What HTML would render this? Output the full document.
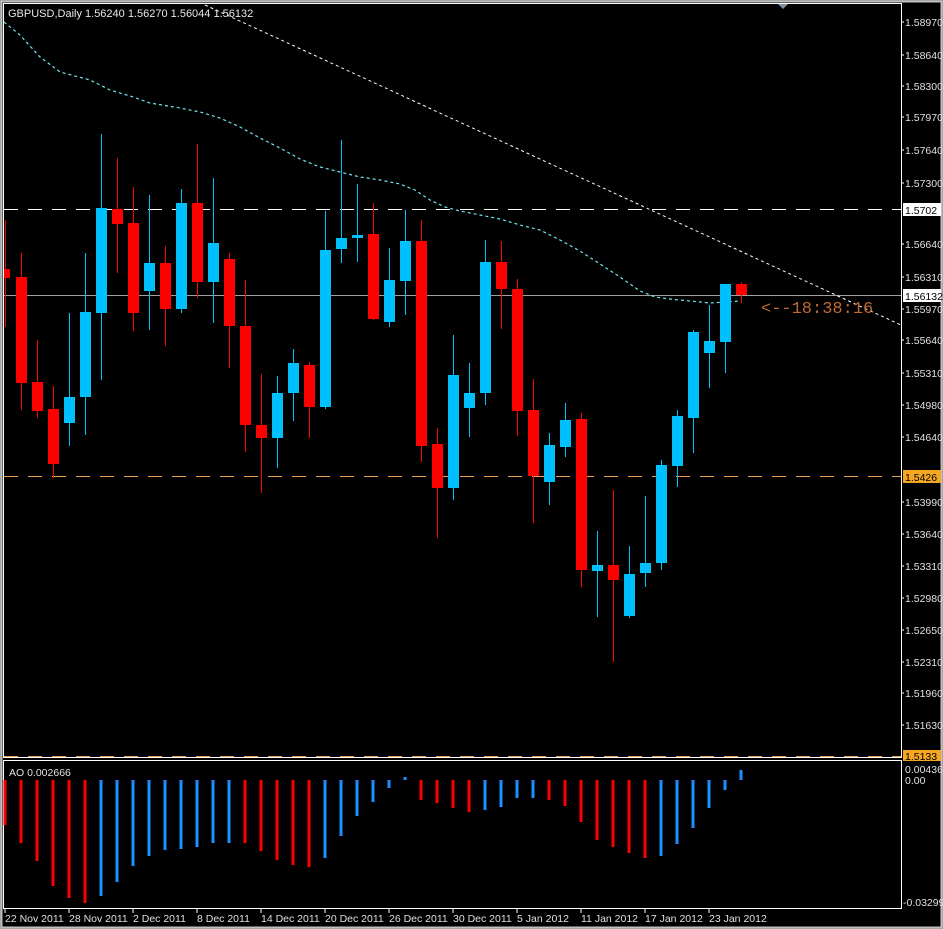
<!DOCTYPE html>
<html><head><meta charset="utf-8"><style>
html,body{margin:0;padding:0;background:#000;}
svg{display:block}
text{font-family:"Liberation Sans",Tahoma,sans-serif;font-size:10.5px;fill:#e0e0e0}
</style></head><body>
<svg width="943" height="929" viewBox="0 0 943 929" xmlns="http://www.w3.org/2000/svg">
<rect x="0" y="0" width="943" height="929" fill="#000"/>
<rect x="0.5" y="0.5" width="942" height="928" fill="none" stroke="#909090" stroke-width="1"/>
<rect x="1.5" y="1.5" width="940" height="926" fill="none" stroke="#c0c0c0" stroke-width="2"/>
<rect x="3.5" y="3.5" width="898" height="754" fill="none" stroke="#ffffff" stroke-width="1"/>
<rect x="3.5" y="760.5" width="898" height="148" fill="none" stroke="#ffffff" stroke-width="1"/>
<polygon points="778,4 788,4 783,9" fill="#8090a0"/>

<line x1="4" y1="209.5" x2="901" y2="209.5" stroke="#fff" stroke-dasharray="14,10"/>
<line x1="4" y1="295.5" x2="901" y2="295.5" stroke="#a0a0a0"/>
<line x1="4" y1="476.5" x2="901" y2="476.5" stroke="#f0a050" stroke-dasharray="14,10"/>
<line x1="4" y1="756.5" x2="901" y2="756.5" stroke="#f0a050" stroke-dasharray="14,10"/>

<line x1="205" y1="5" x2="901" y2="325" stroke="#fff" stroke-dasharray="3,3"/>
<polyline fill="none" stroke="#6fe6f0" stroke-width="1.2" stroke-dasharray="3,3" points="4,22 20,35 40,57 60,72 90,80 110,90 130,96 150,103 180,108 200,112 220,118 240,127 260,138 280,148 300,159 320,167 340,172 360,177 380,180 400,184 415,190 430,200 445,207 460,211 480,215 500,219 520,225 540,230 560,240 580,251 600,264 620,277 640,291 655,297 670,299 690,301 710,303 740,301"/>

<g id="candles">
<rect x="5" y="220" width="1" height="107" fill="#f00"/><rect x="4" y="269" width="6" height="9" fill="#f00"/>
<rect x="21" y="253" width="1" height="157" fill="#f00"/><rect x="16" y="277" width="11" height="106" fill="#f00"/>
<rect x="37" y="340" width="1" height="78" fill="#f00"/><rect x="32" y="382" width="11" height="29" fill="#f00"/>
<rect x="53" y="386" width="1" height="92" fill="#f00"/><rect x="48" y="409" width="11" height="55" fill="#f00"/>
<rect x="69" y="313" width="1" height="133" fill="#00bfff"/><rect x="64" y="397" width="11" height="26" fill="#00bfff"/>
<rect x="85" y="253" width="1" height="182" fill="#00bfff"/><rect x="80" y="312" width="11" height="85" fill="#00bfff"/>
<rect x="101" y="134" width="1" height="246" fill="#00bfff"/><rect x="96" y="208" width="11" height="105" fill="#00bfff"/>
<rect x="117" y="158" width="1" height="115" fill="#f00"/><rect x="112" y="209" width="11" height="15" fill="#f00"/>
<rect x="133" y="187" width="1" height="144" fill="#f00"/><rect x="128" y="223" width="11" height="90" fill="#f00"/>
<rect x="149" y="195" width="1" height="135" fill="#00bfff"/><rect x="144" y="263" width="11" height="28" fill="#00bfff"/>
<rect x="165" y="246" width="1" height="100" fill="#f00"/><rect x="160" y="263" width="11" height="46" fill="#f00"/>
<rect x="181" y="189" width="1" height="124" fill="#00bfff"/><rect x="176" y="203" width="11" height="106" fill="#00bfff"/>
<rect x="197" y="144" width="1" height="154" fill="#f00"/><rect x="192" y="203" width="11" height="79" fill="#f00"/>
<rect x="213" y="178" width="1" height="145" fill="#00bfff"/><rect x="208" y="243" width="11" height="39" fill="#00bfff"/>
<rect x="229" y="253" width="1" height="115" fill="#f00"/><rect x="224" y="259" width="11" height="67" fill="#f00"/>
<rect x="245" y="280" width="1" height="172" fill="#f00"/><rect x="240" y="326" width="11" height="99" fill="#f00"/>
<rect x="261" y="374" width="1" height="119" fill="#f00"/><rect x="256" y="425" width="11" height="13" fill="#f00"/>
<rect x="277" y="376" width="1" height="92" fill="#00bfff"/><rect x="272" y="393" width="11" height="45" fill="#00bfff"/>
<rect x="293" y="349" width="1" height="72" fill="#00bfff"/><rect x="288" y="363" width="11" height="30" fill="#00bfff"/>
<rect x="309" y="362" width="1" height="76" fill="#f00"/><rect x="304" y="365" width="11" height="42" fill="#f00"/>
<rect x="325" y="211" width="1" height="198" fill="#00bfff"/><rect x="320" y="250" width="11" height="157" fill="#00bfff"/>
<rect x="341" y="140" width="1" height="123" fill="#00bfff"/><rect x="336" y="238" width="11" height="11" fill="#00bfff"/>
<rect x="357" y="184" width="1" height="78" fill="#00bfff"/><rect x="352" y="235" width="11" height="3" fill="#00bfff"/>
<rect x="373" y="203" width="1" height="117" fill="#f00"/><rect x="368" y="234" width="11" height="85" fill="#f00"/>
<rect x="389" y="248" width="1" height="79" fill="#00bfff"/><rect x="384" y="280" width="11" height="42" fill="#00bfff"/>
<rect x="405" y="210" width="1" height="105" fill="#00bfff"/><rect x="400" y="241" width="11" height="40" fill="#00bfff"/>
<rect x="421" y="220" width="1" height="242" fill="#f00"/><rect x="416" y="241" width="11" height="205" fill="#f00"/>
<rect x="437" y="428" width="1" height="110" fill="#f00"/><rect x="432" y="444" width="11" height="44" fill="#f00"/>
<rect x="453" y="335" width="1" height="165" fill="#00bfff"/><rect x="448" y="375" width="11" height="113" fill="#00bfff"/>
<rect x="469" y="363" width="1" height="74" fill="#00bfff"/><rect x="464" y="393" width="11" height="15" fill="#00bfff"/>
<rect x="485" y="240" width="1" height="165" fill="#00bfff"/><rect x="480" y="262" width="11" height="131" fill="#00bfff"/>
<rect x="501" y="241" width="1" height="88" fill="#f00"/><rect x="496" y="262" width="11" height="27" fill="#f00"/>
<rect x="517" y="279" width="1" height="157" fill="#f00"/><rect x="512" y="289" width="11" height="122" fill="#f00"/>
<rect x="533" y="379" width="1" height="144" fill="#f00"/><rect x="528" y="410" width="11" height="66" fill="#f00"/>
<rect x="549" y="433" width="1" height="72" fill="#00bfff"/><rect x="544" y="445" width="11" height="37" fill="#00bfff"/>
<rect x="565" y="403" width="1" height="54" fill="#00bfff"/><rect x="560" y="420" width="11" height="27" fill="#00bfff"/>
<rect x="581" y="413" width="1" height="174" fill="#f00"/><rect x="576" y="419" width="11" height="151" fill="#f00"/>
<rect x="597" y="531" width="1" height="86" fill="#00bfff"/><rect x="592" y="565" width="11" height="6" fill="#00bfff"/>
<rect x="613" y="490" width="1" height="172" fill="#f00"/><rect x="608" y="565" width="11" height="15" fill="#f00"/>
<rect x="629" y="546" width="1" height="72" fill="#00bfff"/><rect x="624" y="574" width="11" height="42" fill="#00bfff"/>
<rect x="645" y="496" width="1" height="91" fill="#00bfff"/><rect x="640" y="563" width="11" height="10" fill="#00bfff"/>
<rect x="661" y="460" width="1" height="110" fill="#00bfff"/><rect x="656" y="465" width="11" height="98" fill="#00bfff"/>
<rect x="677" y="410" width="1" height="77" fill="#00bfff"/><rect x="672" y="416" width="11" height="50" fill="#00bfff"/>
<rect x="693" y="330" width="1" height="123" fill="#00bfff"/><rect x="688" y="332" width="11" height="86" fill="#00bfff"/>
<rect x="709" y="305" width="1" height="83" fill="#00bfff"/><rect x="704" y="341" width="11" height="12" fill="#00bfff"/>
<rect x="725" y="284" width="1" height="89" fill="#00bfff"/><rect x="720" y="284" width="11" height="58" fill="#00bfff"/>
<rect x="741" y="282" width="1" height="21" fill="#f00"/><rect x="736" y="284" width="11" height="11" fill="#f00"/>
</g>

<text x="761" y="313" style="font-family:'Liberation Mono',monospace;font-size:17px;fill:#c06a30">&lt;--18:38:16</text>
<text x="8" y="17" style="font-size:11px;fill:#e8e8e8">GBPUSD,Daily  1.56240 1.56270 1.56044 1.56132</text>

<g>
<text x="905" y="26">1.58970</text>
<text x="905" y="59">1.58640</text>
<text x="905" y="90">1.58300</text>
<text x="905" y="121">1.57970</text>
<text x="905" y="154">1.57640</text>
<text x="905" y="187">1.57300</text>
<text x="905" y="248">1.56640</text>
<text x="905" y="281">1.56310</text>
<text x="905" y="313">1.55970</text>
<text x="905" y="344">1.55640</text>
<text x="905" y="377">1.55310</text>
<text x="905" y="409">1.54980</text>
<text x="905" y="441">1.54640</text>
<text x="905" y="506">1.53990</text>
<text x="905" y="538">1.53640</text>
<text x="905" y="570">1.53310</text>
<text x="905" y="602">1.52980</text>
<text x="905" y="634">1.52650</text>
<text x="905" y="666">1.52310</text>
<text x="905" y="697">1.51960</text>
<text x="905" y="729">1.51630</text>
</g>
<g stroke="#fff">
<line x1="901" y1="22" x2="904" y2="22"/><line x1="901" y1="55" x2="904" y2="55"/><line x1="901" y1="86" x2="904" y2="86"/><line x1="901" y1="117" x2="904" y2="117"/><line x1="901" y1="150" x2="904" y2="150"/><line x1="901" y1="183" x2="904" y2="183"/><line x1="901" y1="244" x2="904" y2="244"/><line x1="901" y1="277" x2="904" y2="277"/><line x1="901" y1="309" x2="904" y2="309"/><line x1="901" y1="340" x2="904" y2="340"/><line x1="901" y1="373" x2="904" y2="373"/><line x1="901" y1="405" x2="904" y2="405"/><line x1="901" y1="437" x2="904" y2="437"/><line x1="901" y1="502" x2="904" y2="502"/><line x1="901" y1="534" x2="904" y2="534"/><line x1="901" y1="566" x2="904" y2="566"/><line x1="901" y1="598" x2="904" y2="598"/><line x1="901" y1="630" x2="904" y2="630"/><line x1="901" y1="662" x2="904" y2="662"/><line x1="901" y1="693" x2="904" y2="693"/><line x1="901" y1="725" x2="904" y2="725"/>
</g>
<rect x="903" y="203" width="38" height="13" fill="#fff"/><text x="905" y="214" style="fill:#000">1.5702</text>
<rect x="903" y="289" width="38" height="13" fill="#fff"/><text x="905" y="300" style="fill:#000">1.56132</text>
<rect x="903" y="470" width="38" height="13" fill="#f5a623"/><text x="905" y="481" style="fill:#000">1.5426</text>
<rect x="903" y="750" width="38" height="11" fill="#f5a623"/><text x="905" y="760" style="fill:#000">1.5133</text>

<text x="9" y="776">AO 0.002666</text>
<text x="905" y="773">0.004364</text>
<text x="905" y="784">0.00</text>
<text x="903" y="906">-0.03299</text>
<g stroke-width="3">
<line x1="5" y1="780" x2="5" y2="825" stroke="#f00"/>
<line x1="21" y1="780" x2="21" y2="843" stroke="#f00"/>
<line x1="37" y1="780" x2="37" y2="861" stroke="#f00"/>
<line x1="53" y1="780" x2="53" y2="886" stroke="#f00"/>
<line x1="69" y1="780" x2="69" y2="898" stroke="#f00"/>
<line x1="85" y1="780" x2="85" y2="903" stroke="#f00"/>
<line x1="101" y1="780" x2="101" y2="896" stroke="#1e90ff"/>
<line x1="117" y1="780" x2="117" y2="882" stroke="#1e90ff"/>
<line x1="133" y1="780" x2="133" y2="866" stroke="#1e90ff"/>
<line x1="149" y1="780" x2="149" y2="856" stroke="#1e90ff"/>
<line x1="165" y1="780" x2="165" y2="850" stroke="#1e90ff"/>
<line x1="181" y1="780" x2="181" y2="849" stroke="#1e90ff"/>
<line x1="197" y1="780" x2="197" y2="847" stroke="#1e90ff"/>
<line x1="213" y1="780" x2="213" y2="843" stroke="#1e90ff"/>
<line x1="229" y1="780" x2="229" y2="843" stroke="#1e90ff"/>
<line x1="245" y1="780" x2="245" y2="843" stroke="#f00"/>
<line x1="261" y1="780" x2="261" y2="851" stroke="#f00"/>
<line x1="277" y1="780" x2="277" y2="860" stroke="#f00"/>
<line x1="293" y1="780" x2="293" y2="865" stroke="#f00"/>
<line x1="309" y1="780" x2="309" y2="867" stroke="#f00"/>
<line x1="325" y1="780" x2="325" y2="858" stroke="#1e90ff"/>
<line x1="341" y1="780" x2="341" y2="836" stroke="#1e90ff"/>
<line x1="357" y1="780" x2="357" y2="816" stroke="#1e90ff"/>
<line x1="373" y1="780" x2="373" y2="802" stroke="#1e90ff"/>
<line x1="389" y1="780" x2="389" y2="788" stroke="#1e90ff"/>
<line x1="405" y1="777" x2="405" y2="780" stroke="#1e90ff"/>
<line x1="421" y1="780" x2="421" y2="800" stroke="#f00"/>
<line x1="437" y1="780" x2="437" y2="803" stroke="#f00"/>
<line x1="453" y1="780" x2="453" y2="808" stroke="#f00"/>
<line x1="469" y1="780" x2="469" y2="812" stroke="#f00"/>
<line x1="485" y1="780" x2="485" y2="810" stroke="#1e90ff"/>
<line x1="501" y1="780" x2="501" y2="807" stroke="#1e90ff"/>
<line x1="517" y1="780" x2="517" y2="798" stroke="#1e90ff"/>
<line x1="533" y1="780" x2="533" y2="798" stroke="#1e90ff"/>
<line x1="549" y1="780" x2="549" y2="800" stroke="#f00"/>
<line x1="565" y1="780" x2="565" y2="806" stroke="#f00"/>
<line x1="581" y1="780" x2="581" y2="822" stroke="#f00"/>
<line x1="597" y1="780" x2="597" y2="840" stroke="#f00"/>
<line x1="613" y1="780" x2="613" y2="847" stroke="#f00"/>
<line x1="629" y1="780" x2="629" y2="853" stroke="#f00"/>
<line x1="645" y1="780" x2="645" y2="858" stroke="#f00"/>
<line x1="661" y1="780" x2="661" y2="856" stroke="#1e90ff"/>
<line x1="677" y1="780" x2="677" y2="844" stroke="#1e90ff"/>
<line x1="693" y1="780" x2="693" y2="828" stroke="#1e90ff"/>
<line x1="709" y1="780" x2="709" y2="808" stroke="#1e90ff"/>
<line x1="725" y1="780" x2="725" y2="790" stroke="#1e90ff"/>
<line x1="741" y1="770" x2="741" y2="780" stroke="#1e90ff"/>
</g>

<g stroke="#fff">
<line x1="5" y1="909" x2="5" y2="913"/><line x1="69" y1="909" x2="69" y2="913"/><line x1="133" y1="909" x2="133" y2="913"/><line x1="197" y1="909" x2="197" y2="913"/><line x1="261" y1="909" x2="261" y2="913"/><line x1="325" y1="909" x2="325" y2="913"/><line x1="389" y1="909" x2="389" y2="913"/><line x1="453" y1="909" x2="453" y2="913"/><line x1="517" y1="909" x2="517" y2="913"/><line x1="581" y1="909" x2="581" y2="913"/><line x1="645" y1="909" x2="645" y2="913"/><line x1="709" y1="909" x2="709" y2="913"/>
</g>
<g>
<text x="5" y="922">22 Nov 2011</text>
<text x="69" y="922">28 Nov 2011</text>
<text x="133" y="922">2 Dec 2011</text>
<text x="197" y="922">8 Dec 2011</text>
<text x="261" y="922">14 Dec 2011</text>
<text x="325" y="922">20 Dec 2011</text>
<text x="389" y="922">26 Dec 2011</text>
<text x="453" y="922">30 Dec 2011</text>
<text x="517" y="922">5 Jan 2012</text>
<text x="581" y="922">11 Jan 2012</text>
<text x="645" y="922">17 Jan 2012</text>
<text x="709" y="922">23 Jan 2012</text>
</g>
</svg>
</body></html>
